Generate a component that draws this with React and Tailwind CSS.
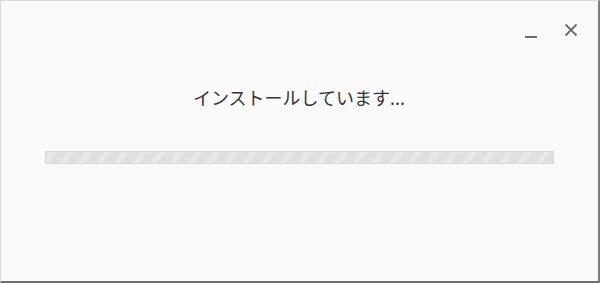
import React from 'react';

const stripes = {
  backgroundImage:
    'repeating-linear-gradient(-55deg, #e0e0e0 0px, #e0e0e0 8px, #e9e9e9 10px, #e9e9e9 13px, #e0e0e0 15px)',
};

const App = () => {
  return (
    <div
      className="w-[600px] h-[283px] bg-[#fafafa] border-t border-l border-t-[#dadada] border-l-[#dadada] border-r-2 border-b-2 border-r-[#7d7d7d] border-b-[#6f6f6f] flex flex-col"
      style={{ fontFamily: '"Noto Sans CJK JP", "Noto Sans", sans-serif' }}
    >
      {/* Title bar buttons */}
      <div className="flex justify-end items-center gap-[27px] pt-[18px] pr-[20px] h-[40px]">
        <svg width="12" height="14" viewBox="0 0 12 14" className="mt-[4px]">
          <rect x="0" y="11" width="12" height="2" fill="#6b6b6b" />
        </svg>
        <svg width="14" height="14" viewBox="0 0 14 14">
          <path d="M1.5 1.5 L12.5 12.5 M12.5 1.5 L1.5 12.5" stroke="#6b6b6b" strokeWidth="1.8" />
        </svg>
      </div>

      {/* Status text */}
      <div className="flex justify-center mt-[45px] pr-[1px]">
        <p className="text-[18px] leading-[22px] text-[#333333]">
          インストールしています...
        </p>
      </div>

      {/* Progress bar */}
      <div className="mt-[43px] pl-[44px] pr-[44px]">
        <div className="h-[13px] border border-[#d9d9d9]" style={stripes} />
      </div>
    </div>
  );
};

export default App;
